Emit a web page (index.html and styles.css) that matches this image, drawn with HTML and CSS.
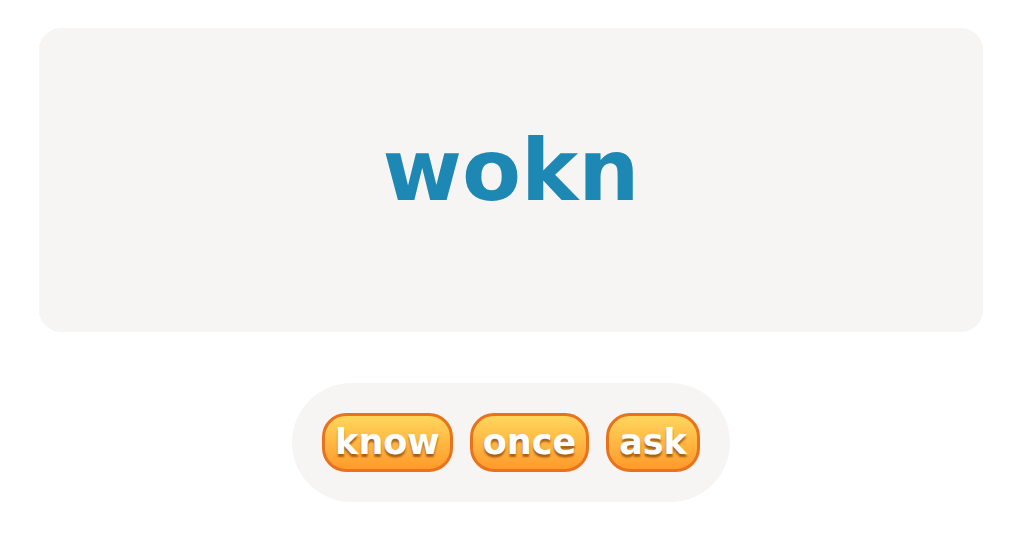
FILE: index.html
```html
<!DOCTYPE html>
<html>
<head>
<meta charset="utf-8">
<link rel="stylesheet" href="styles.css">
</head>
<body>
<main class="page">
  <section class="word-card">
    <div class="word">wokn</div>
  </section>
  <div class="choices">
    <button class="choice">know</button>
    <button class="choice">once</button>
    <button class="choice">ask</button>
  </div>
</main>
</body>
</html>
```
FILE: styles.css
```css
html, body {
  margin: 0;
  padding: 0;
  background: #ffffff;
}
.page {
  width: 1022px;
  height: 533px;
  box-sizing: border-box;
  padding: 28px 39px 0;
  display: flex;
  flex-direction: column;
  align-items: center;
}
.word-card {
  width: 944px;
  height: 304px;
  background: #f6f5f4;
  border-radius: 22px;
  display: flex;
  align-items: center;
  justify-content: center;
}
.word {
  font-family: "DejaVu Sans", sans-serif;
  font-weight: bold;
  font-size: 86px;
  color: #1e88b4;
  line-height: 1;
  margin-top: -20px;
}
.choices {
  margin-top: 51px;
  background: #f6f5f4;
  border-radius: 60px;
  padding: 30px;
  display: flex;
  gap: 17px;
}
.choice {
  height: 59px;
  box-sizing: border-box;
  padding: 0 10px;
  border: 3px solid #e8731c;
  border-radius: 24px;
  background: linear-gradient(to bottom, #ffd65c 0%, #ffb23e 60%, #ff9a2a 100%);
  color: #ffffff;
  font-family: "DejaVu Sans", sans-serif;
  font-weight: bold;
  font-size: 35px;
  line-height: 1;
  text-shadow: 0 3px 2px rgba(110, 45, 0, 0.6);
  cursor: pointer;
}
```
